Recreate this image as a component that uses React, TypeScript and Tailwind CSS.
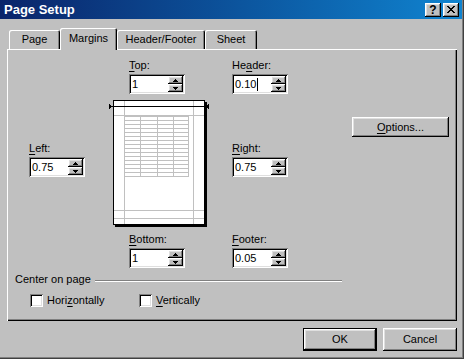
import React from "react";

const raised =
  "shadow-[inset_-1px_-1px_#000,inset_1px_1px_#fff,inset_-2px_-2px_#808080,inset_2px_2px_#dfdfdf]";
const sunken =
  "shadow-[inset_1px_1px_#808080,inset_-1px_-1px_#fff,inset_2px_2px_#000,inset_-2px_-2px_#dfdfdf]";

function U({ children }: { children: React.ReactNode }) {
  return <span className="underline underline-offset-[2px] decoration-1">{children}</span>;
}

function SpinArrow({ up }: { up?: boolean }) {
  return (
    <svg width="5" height="3" viewBox="0 0 5 3" shapeRendering="crispEdges">
      {up ? (
        <polygon points="2.5,0 5,3 0,3" fill="#000" />
      ) : (
        <polygon points="0,0 5,0 2.5,3" fill="#000" />
      )}
    </svg>
  );
}

function Spin({ value, caret }: { value: string; caret?: boolean }) {
  return (
    <div className={`w-[56px] h-[20px] bg-white p-[2px] flex ${sunken}`}>
      <div className="flex-1 flex items-center pl-[1px] leading-[13px]">
        <span>{value}</span>
        {caret && <span className="w-px h-[13px] bg-black ml-[1px]" />}
      </div>
      <div className="w-[15px] flex flex-col">
        <div className={`h-[8px] bg-[#c0c0c0] flex items-center justify-center ${raised}`}>
          <SpinArrow up />
        </div>
        <div className={`h-[8px] bg-[#c0c0c0] flex items-center justify-center ${raised}`}>
          <SpinArrow />
        </div>
      </div>
    </div>
  );
}

function Field({ label, value, caret }: { label: React.ReactNode; value: string; caret?: boolean }) {
  return (
    <div className="flex flex-col">
      <div className="leading-[13px] h-[13px] mb-[2px]">{label}</div>
      <Spin value={value} caret={caret} />
    </div>
  );
}

function PagePreview() {
  const rows: number[] = [];
  for (let y = 16.5; y <= 76.5; y += 4) rows.push(y);
  const cols = [16.5, 32.5, 49.5, 65.5, 80.5];
  return (
    <svg width="102" height="127" viewBox="0 0 102 127" shapeRendering="crispEdges">
      <rect x="97" y="2" width="2" height="125" fill="#000" />
      <rect x="7" y="125" width="92" height="2" fill="#000" />
      <rect x="5.5" y="0.5" width="91" height="124" fill="#fff" stroke="#000" />
      <line x1="16.5" y1="1" x2="16.5" y2="124" stroke="#c0c0c0" />
      <line x1="85.5" y1="1" x2="85.5" y2="124" stroke="#c0c0c0" />
      <line x1="6" y1="15.5" x2="96" y2="15.5" stroke="#c0c0c0" />
      <line x1="6" y1="110.5" x2="96" y2="110.5" stroke="#c0c0c0" />
      <line x1="6" y1="118.5" x2="96" y2="118.5" stroke="#c0c0c0" />
      {rows.map((y) => (
        <line key={y} x1="16" y1={y} x2="81" y2={y} stroke="#c0c0c0" />
      ))}
      {cols.map((x) => (
        <line key={x} x1={x} y1="16" x2={x} y2="77" stroke="#c0c0c0" />
      ))}
      <line x1="2" y1="6.5" x2="100" y2="6.5" stroke="#000" />
      <polygon points="1,3.5 4.5,6.5 1,9.5" fill="#000" />
      <polygon points="101,3.5 97.5,6.5 101,9.5" fill="#000" />
    </svg>
  );
}

function Tab({ label, width, selected }: { label: string; width: string; selected?: boolean }) {
  return (
    <div
      className={`${width} ${
        selected ? "h-[22px] -mb-[1px] pt-[4px] relative z-10" : "h-[19px] pt-[3px]"
      } bg-[#c0c0c0] rounded-t-[2px] text-center leading-[13px] shadow-[inset_1px_1px_#fff,inset_-1px_0_#000,inset_-2px_0_#808080]`}
    >
      {label}
    </div>
  );
}

function Checkbox({ label }: { label: React.ReactNode }) {
  return (
    <div className="flex items-center h-[13px]">
      <div className={`w-[13px] h-[13px] bg-white ${sunken}`} />
      <div className="ml-[4px] leading-[13px]">{label}</div>
    </div>
  );
}

export default function App() {
  return (
    <div
      className="w-[464px] h-[359px] bg-[#c0c0c0] text-black text-[11px] flex flex-col shadow-[inset_-1px_-1px_#404040,inset_-2px_-2px_#808080] overflow-hidden"
      style={{ fontFamily: '"Liberation Sans", Arial, sans-serif' }}
    >
      {/* Title bar */}
      <div className="w-[462px] h-[19px] bg-gradient-to-r from-[#0a246a] to-[#1084d0] flex items-center pl-[4px] pr-[3px]">
        <div className="text-white font-bold text-[13px] leading-[15px] flex-1">Page Setup</div>
        <div className={`w-[16px] h-[14px] bg-[#c0c0c0] flex items-center justify-center font-bold text-[12px] leading-[12px] ${raised}`}>
          ?
        </div>
        <div className={`w-[16px] h-[14px] ml-[2px] bg-[#c0c0c0] flex items-center justify-center ${raised}`}>
          <svg width="8" height="7" viewBox="0 0 8 7" shapeRendering="crispEdges">
            <path d="M0 0h2v1h1v1h2V1h1V0h2v1H7v1H6v1H5v1h1v1h1v1h1v1H6V6H5V5H3v1H2v1H0V6h1V5h1V4h1V3H2V2H1V1H0z" fill="#000" />
          </svg>
        </div>
      </div>

      {/* Body */}
      <div className="pl-[7px] pt-[9px] flex flex-col">
        <div className="flex items-end h-[21px] pl-[2px]">
          <Tab label="Page" width="w-[51px]" />
          <Tab label="Margins" width="w-[57px]" selected />
          <Tab label="Header/Footer" width="w-[88px]" />
          <Tab label="Sheet" width="w-[52px]" />
        </div>

        <div className="w-[450px] h-[272px] flex flex-col shadow-[inset_1px_1px_#fff,inset_-1px_-1px_#000,inset_-2px_-2px_#808080]">
          <div className="flex">
            <div className="w-[101px] pl-[22px] pt-[93px]">
              <Field label={<><U>L</U>eft:</>} value="0.75" />
            </div>
            <div className="w-[124px] pt-[10px] flex flex-col">
              <div className="ml-[21px]">
                <Field label={<><U>T</U>op:</>} value="1" />
              </div>
              <div className="mt-[6px]">
                <PagePreview />
              </div>
              <div className="ml-[21px] mt-[6px]">
                <Field label={<><U>B</U>ottom:</>} value="1" />
              </div>
            </div>
            <div className="flex-1 pt-[10px] flex flex-col">
              <Field label={<>He<U>a</U>der:</>} value="0.10" caret />
              <div className="mt-[23px] ml-[120px]">
                <div className={`w-[97px] h-[20px] flex items-center justify-center leading-[13px] ${raised}`}>
                  <span>
                    <U>O</U>ptions...
                  </span>
                </div>
              </div>
              <div className="mt-[5px]">
                <Field label={<><U>R</U>ight:</>} value="0.75" />
              </div>
              <div className="mt-[56px]">
                <Field label={<><U>F</U>ooter:</>} value="0.05" />
              </div>
            </div>
          </div>

          <div className="mt-[5px] ml-[8px] w-[327px] flex items-center h-[13px]">
            <span className="leading-[13px]">Center on page</span>
            <div className="flex-1 ml-[4px] mt-[3px] border-t border-t-[#808080] border-b border-b-white h-[2px]" />
          </div>
          <div className="mt-[8px] pl-[23px] flex">
            <div className="w-[109px]">
              <Checkbox label={<>Hori<U>z</U>ontally</>} />
            </div>
            <Checkbox label={<><U>V</U>ertically</>} />
          </div>
        </div>

        <div className="w-[450px] mt-[7px] flex justify-end gap-[6px]">
          <div className="w-[74px] h-[23px] border border-black">
            <div className={`w-full h-full flex items-center justify-center ${raised}`}>OK</div>
          </div>
          <div className={`w-[74px] h-[23px] flex items-center justify-center ${raised}`}>Cancel</div>
        </div>
      </div>
    </div>
  );
}
